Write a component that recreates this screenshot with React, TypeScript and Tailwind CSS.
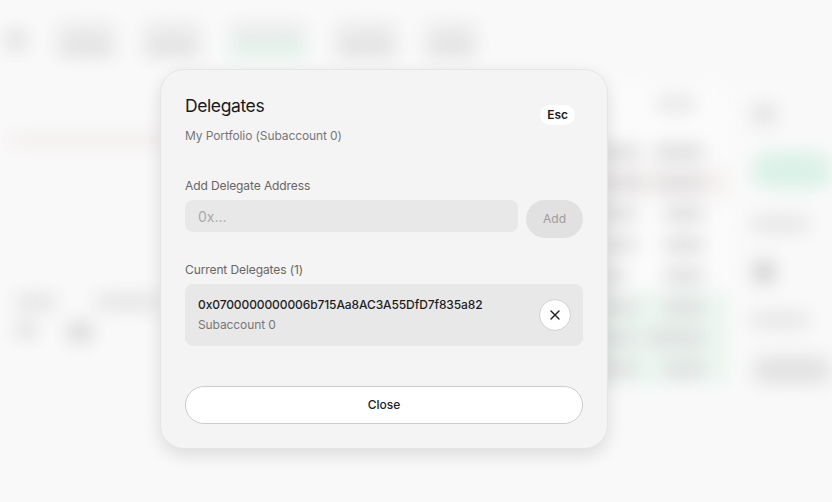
import { X } from "lucide-react";

const TOP_ITEMS = [
  { w: "w-[56px]", tone: "bg-[#d2d2d2]" },
  { w: "w-[56px]", tone: "bg-[#d2d2d2]" },
  { w: "w-[76px]", tone: "bg-[#cfe9dc]" },
  { w: "w-[60px]", tone: "bg-[#d2d2d2]" },
  { w: "w-[50px]", tone: "bg-[#d2d2d2]" },
];

const BOOK_ROWS = [
  { tint: "", w1: "w-[44px]", w2: "w-[50px]" },
  { tint: "bg-[#f2eaea]", w1: "w-[48px]", w2: "w-[48px]" },
  { tint: "", w1: "w-[40px]", w2: "w-[40px]" },
  { tint: "", w1: "w-[40px]", w2: "w-[40px]" },
  { tint: "", w1: "w-[30px]", w2: "w-[40px]" },
  { tint: "bg-[#e3f2ea]", w1: "w-[40px]", w2: "w-[40px]" },
  { tint: "bg-[#e3f2ea]", w1: "w-[40px]", w2: "w-[56px]" },
  { tint: "bg-[#e3f2ea]", w1: "w-[40px]", w2: "w-[40px]" },
];

function Backdrop() {
  return (
    <div className="absolute inset-0 blur-[9px]">
      <div className="flex h-[88px] items-center gap-[30px] pl-1 pb-2">
        <div className="h-6 w-6 rounded-full bg-[#d6d6d6]" />
        {TOP_ITEMS.map((it, i) => (
          <div key={i} className="flex flex-col gap-1">
            <div className={`h-3 ${it.w} rounded bg-[#dcdcdc]`} />
            <div className={`h-4 ${it.w} rounded ${it.tone}`} />
          </div>
        ))}
      </div>
      <div className="flex">
        <div className="w-[505px]">
          <div className="mt-12 ml-2 h-[8px] w-[160px] rounded-full bg-[#eadada]" />
          <div className="mt-[150px] ml-4 flex gap-10">
            <div className="h-4 w-10 rounded bg-[#d8d8d8]" />
            <div className="h-4 w-16 rounded bg-[#d8d8d8]" />
          </div>
          <div className="mt-3 ml-4 flex gap-8">
            <div className="h-4 w-5 rounded bg-[#d0d0d0]" />
            <div className="h-5 w-6 rounded bg-[#c8c8c8]" />
          </div>
        </div>
        <div className="w-[255px] bg-[#fafafa] pt-2">
          <div className="mb-6 flex justify-between px-8">
            <div className="h-4 w-14 rounded bg-[#d6d6d6]" />
            <div className="h-4 w-10 rounded bg-[#dcdcdc]" />
          </div>
          {BOOK_ROWS.map((r, i) => (
            <div key={i} className={`flex h-[31px] items-center justify-between pl-28 pr-6 ${r.tint}`}>
              <div className={`h-4 ${r.w1} rounded bg-[#cfcfcf]`} />
              <div className={`h-4 ${r.w2} rounded bg-[#cfcfcf]`} />
            </div>
          ))}
        </div>
        <div className="flex flex-1 flex-col gap-7 pl-6 pt-4">
          <div className="h-5 w-6 rounded bg-[#d6d6d6]" />
          <div className="h-9 w-[80px] rounded-full bg-[#c9ecdc]" />
          <div className="h-4 w-14 rounded bg-[#dadada]" />
          <div className="h-6 w-6 rounded-full bg-[#bdbdbd]" />
          <div className="h-4 w-14 rounded bg-[#dadada]" />
          <div className="h-7 w-20 rounded-full bg-[#d6d6d6]" />
        </div>
      </div>
    </div>
  );
}

export default function App() {
  return (
    <div
      className="relative h-[502px] w-full overflow-hidden bg-[#f7f7f7] text-[#1a1a1a]"
      style={{ fontFamily: "Inter, 'Noto Sans', sans-serif" }}
    >
      <Backdrop />
      <div className="absolute inset-0 bg-white/30" />

      <div className="absolute left-[160px] top-[69px] w-[448px] rounded-[24px] border border-[#e6e6e6] bg-[#f4f4f4] px-6 pb-6 pt-[22px] shadow-[0_6px_18px_rgba(0,0,0,0.12)]">
        <div className="flex items-center justify-between">
          <div>
            <h2 className="text-[17.5px] font-normal leading-7 tracking-[-0.4px] text-[#1a1a1a]">Delegates</h2>
            <p className="mt-[6px] text-[12px] leading-5 tracking-[-0.1px] text-[#777777]">My Portfolio (Subaccount 0)</p>
          </div>
          <span className="mb-2 mr-[8px] rounded-full bg-white px-[7px] py-[2px] text-[12px] font-semibold leading-4 text-[#1a1a1a]">
            Esc
          </span>
        </div>

        <div className="mt-[30px] text-[12px] leading-5 tracking-[-0.1px] text-[#666666]">Add Delegate Address</div>
        <div className="mt-1 flex items-start gap-2">
          <div className="flex h-8 flex-1 items-center rounded-lg bg-[#e8e8e8] px-[13px] text-[14px] text-[#aaaaaa]">
            0x...
          </div>
          <button className="h-[38px] w-[57px] rounded-full bg-[#e1e1e1] text-[12px] text-[#9c9c9c]">Add</button>
        </div>

        <div className="mt-[22px] text-[12px] leading-5 tracking-[-0.1px] text-[#666666]">Current Delegates (1)</div>
        <div className="mt-1 flex h-[62px] items-center justify-between rounded-lg bg-[#e8e8e8] pl-[13px] pr-[12px]">
          <div className="tracking-[-0.1px]">
            <div className="text-[12px] font-medium leading-5 text-[#1e1e1e]">
              0x0700000000006b715Aa8AC3A55DfD7f835a82
            </div>
            <div className="text-[12px] leading-5 text-[#777777]">Subaccount 0</div>
          </div>
          <button className="flex h-8 w-8 items-center justify-center rounded-full border border-[#d0d0d0] bg-white">
            <X className="h-4 w-4 text-[#222222]" strokeWidth={2} />
          </button>
        </div>

        <button className="mt-10 h-[38px] w-full rounded-full border border-[#cccccc] bg-white text-[12px] font-medium text-[#222222]">
          Close
        </button>
      </div>
    </div>
  );
}
